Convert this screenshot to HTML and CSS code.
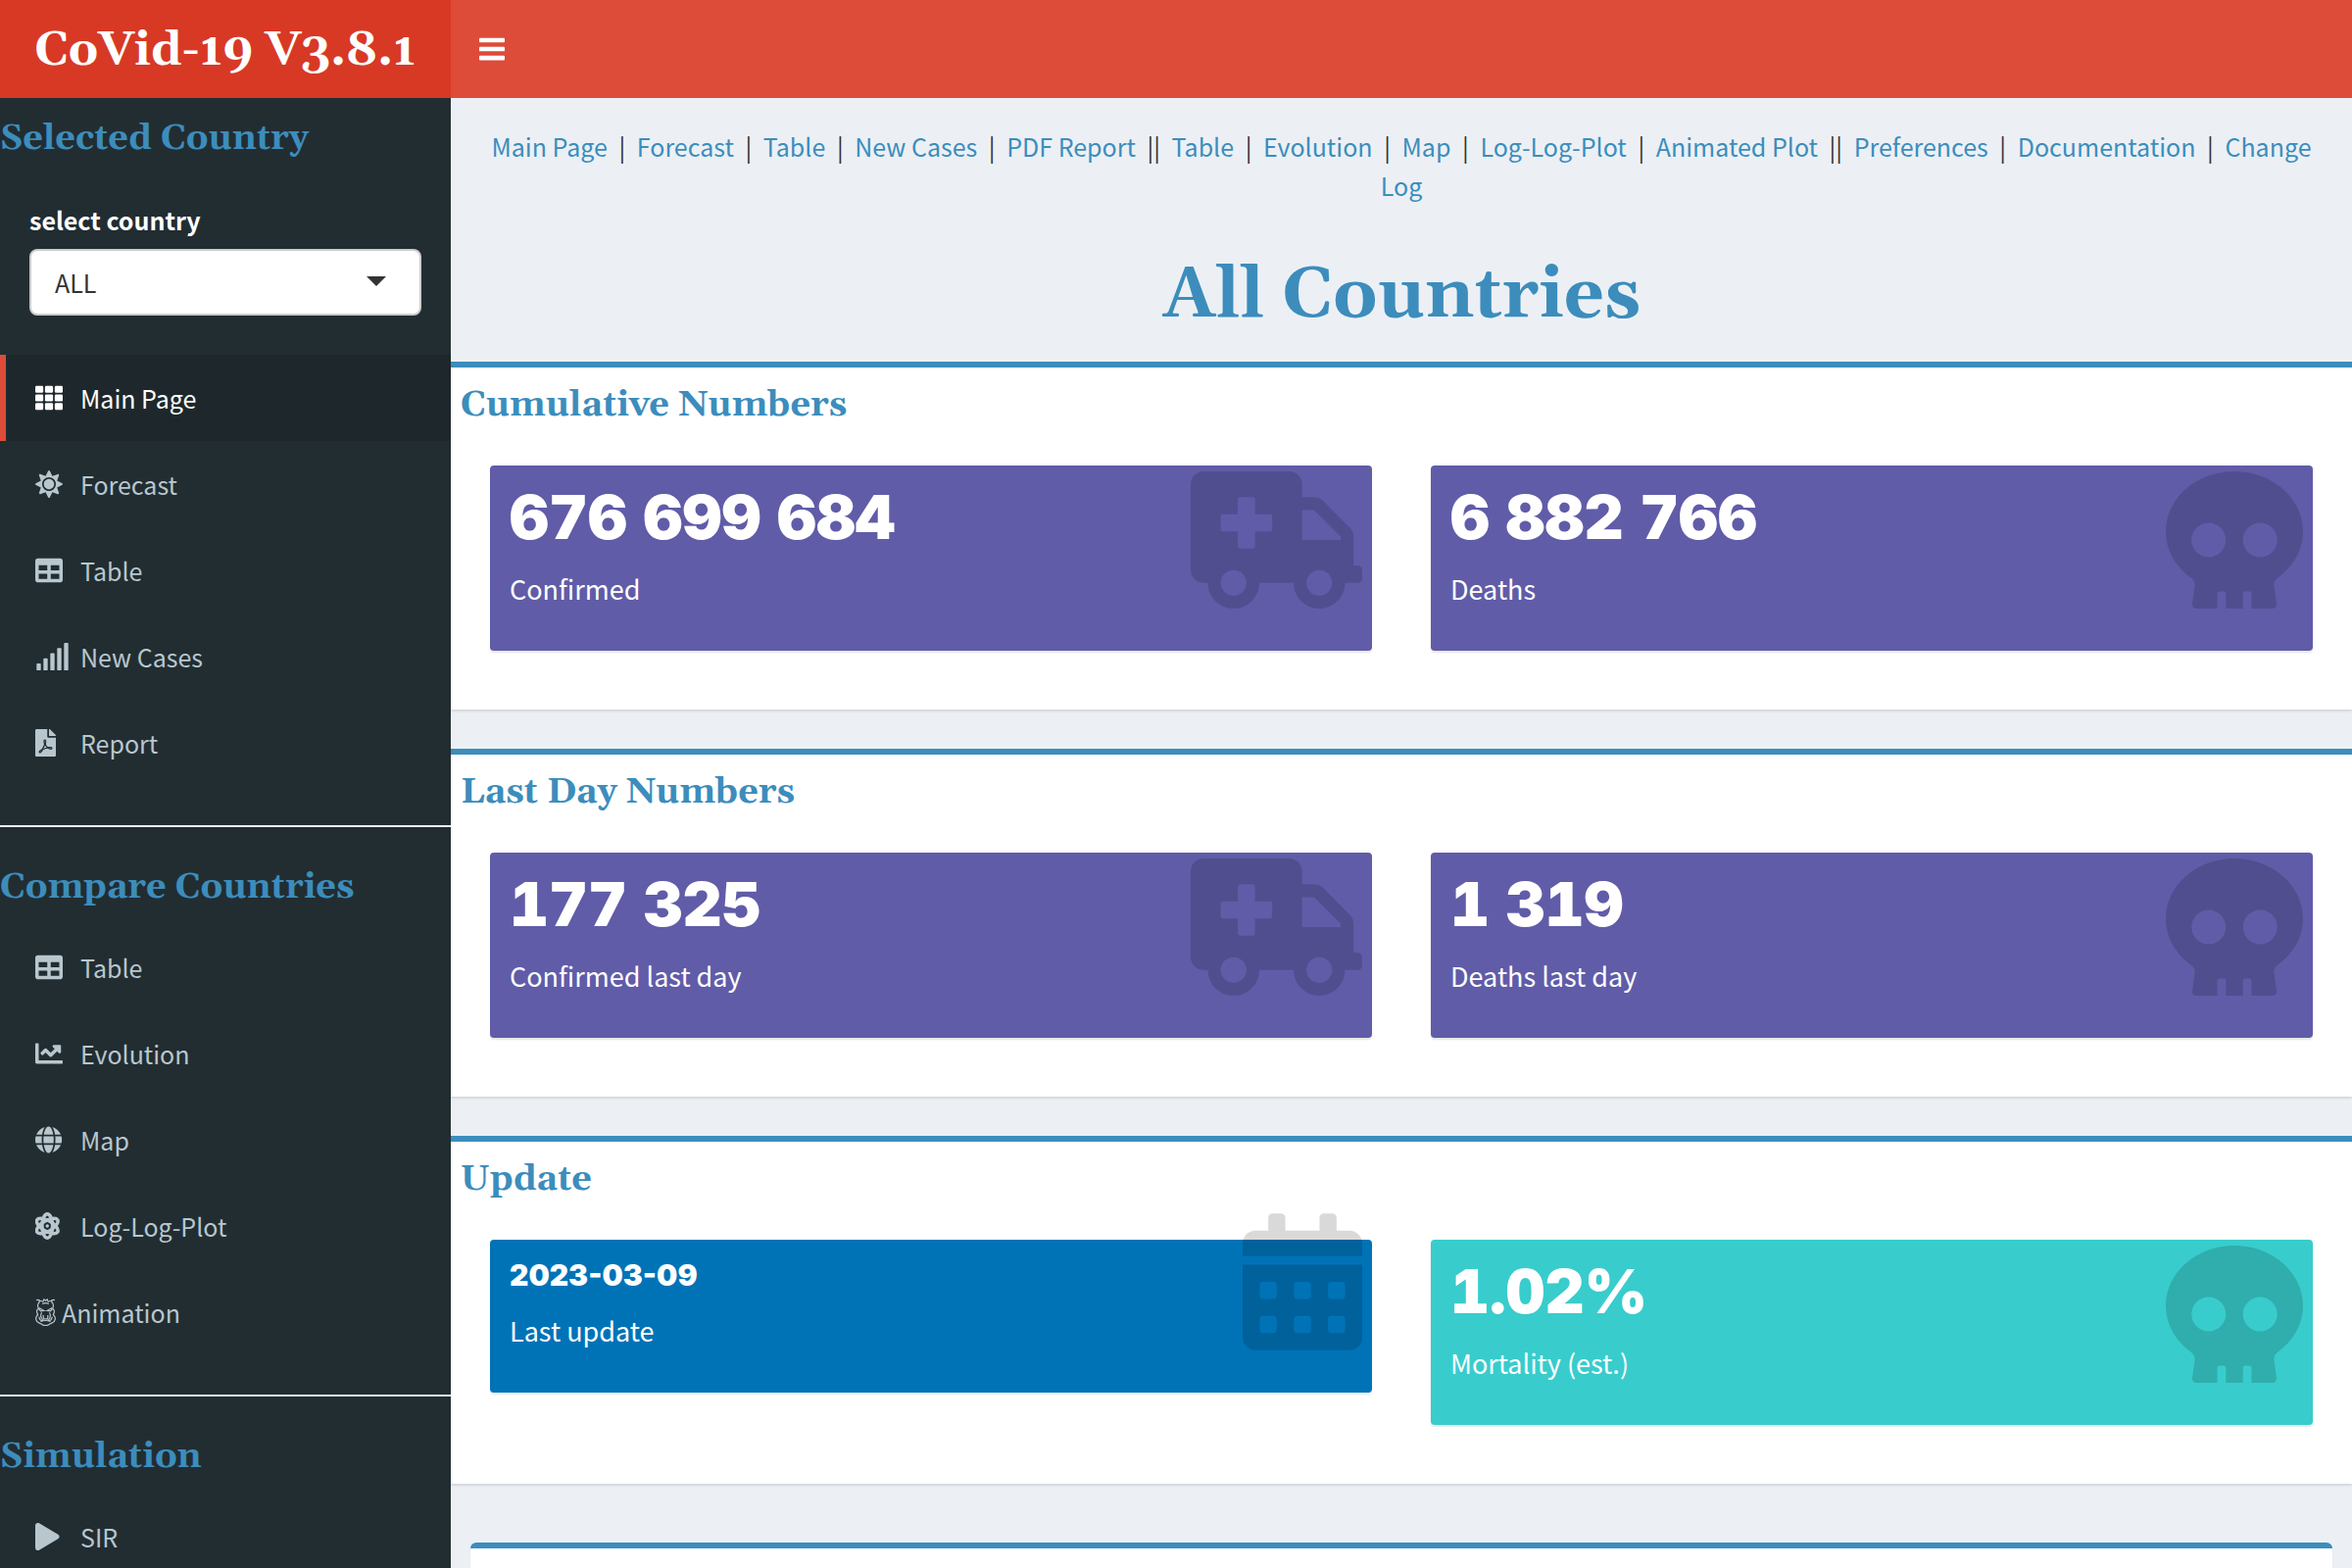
FILE: index.html
```html
<!DOCTYPE html>
<html lang="en">
<head>
<meta charset="utf-8">
<title>CoVid-19 V3.8.1</title>
<link rel="stylesheet" href="styles.css">
</head>
<body>
<svg class="sprite" aria-hidden="true">
  <symbol id="i-bars" viewBox="0 0 448 512"><rect y="60" width="448" height="80" rx="16"/><rect y="216" width="448" height="80" rx="16"/><rect y="372" width="448" height="80" rx="16"/></symbol>
  <symbol id="i-th" viewBox="0 0 512 512"><rect y="32" width="149" height="128" rx="24"/><rect x="181" y="32" width="150" height="128" rx="24"/><rect x="363" y="32" width="149" height="128" rx="24"/><rect y="192" width="149" height="128" rx="24"/><rect x="181" y="192" width="150" height="128" rx="24"/><rect x="363" y="192" width="149" height="128" rx="24"/><rect y="352" width="149" height="128" rx="24"/><rect x="181" y="352" width="150" height="128" rx="24"/><rect x="363" y="352" width="149" height="128" rx="24"/></symbol>
  <symbol id="i-sun" viewBox="0 0 512 512"><path d="M256 160c-52.9 0-96 43.1-96 96s43.1 96 96 96 96-43.1 96-96-43.1-96-96-96zm246.4 80.5l-94.7-47.3 33.5-100.4c4.5-13.6-8.4-26.5-21.9-21.9l-100.4 33.5-47.4-94.8c-6.4-12.8-24.6-12.8-31 0l-47.3 94.7L92.7 70.8c-13.6-4.5-26.5 8.4-21.9 21.9l33.5 100.4-94.7 47.4c-12.8 6.4-12.8 24.6 0 31l94.7 47.3-33.5 100.5c-4.5 13.6 8.4 26.5 21.9 21.9l100.4-33.5 47.3 94.7c6.4 12.8 24.6 12.8 31 0l47.3-94.7 100.4 33.5c13.6 4.5 26.5-8.4 21.9-21.9l-33.5-100.4 94.7-47.3c13-6.5 13-24.7.2-31.1zm-155.9 106c-49.9 49.9-131.1 49.9-181 0-49.9-49.9-49.9-131.1 0-181 49.9-49.9 131.1-49.9 181 0 49.9 49.9 49.9 131.1 0 181z"/></symbol>
  <symbol id="i-table" viewBox="0 0 512 512"><path fill-rule="evenodd" d="M464 32H48C21.5 32 0 53.5 0 80v352c0 26.500 21.500 48 48 48h416c26.500 0 48-21.500 48-48V80c0-26.500-21.500-48-48-48zM224 416H64v-96h160v96zm0-160H64v-96h160v96zm224 160H288v-96h160v96zm0-160H288v-96h160v96z"/></symbol>
  <symbol id="i-signal" viewBox="0 0 640 512"><rect x="24" y="384" width="80" height="128" rx="16"/><rect x="152" y="288" width="80" height="224" rx="16"/><rect x="280" y="192" width="80" height="320" rx="16"/><rect x="408" y="96" width="80" height="416" rx="16"/><rect x="536" y="0" width="80" height="512" rx="16"/></symbol>
  <symbol id="i-pdf" viewBox="0 0 384 512" preserveAspectRatio="xMinYMid meet"><path d="M181.9 256.1c-5-16-4.900-46.900-2-46.900 8.400 0 7.600 36.900 2 46.900zm-1.700 47.200c-7.700 20.200-17.300 43.300-28.400 62.700 18.300-7 39-17.200 62.900-21.900-12.700-9.600-24.900-23.400-34.500-40.800zM86.100 428.100c0 .8 13.200-5.400 34.900-40.200-6.700 6.300-29.100 24.500-34.900 40.200zM248 160h136v328c0 13.300-10.700 24-24 24H24c-13.300 0-24-10.700-24-24V24C0 10.700 10.700 0 24 0h200v136c0 13.200 10.800 24 24 24zm-8 171.800c-20-12.200-33.300-29-42.700-53.800 4.500-18.500 11.600-46.600 6.200-64.200-4.700-29.400-42.400-26.500-47.800-6.800-5 18.300-.4 44.100 8.100 77-11.600 27.600-28.700 64.600-40.800 85.800-.1 0-.1.1-.2.1-27.100 13.900-73.600 44.500-54.500 68 5.600 6.900 16 10 21.500 10 17.900 0 35.700-18 61.100-61.800 25.800-8.500 54.100-19.100 79-23.200 21.700 11.800 47.100 19.500 64 19.500 29.200 0 31.200-32 19.700-43.400-13.900-13.600-54.300-9.700-73.600-7.200zM377 105L279 7c-4.500-4.500-10.600-7-17-7h-6v128h128v-6.100c0-6.300-2.500-12.400-7-16.900zm-74.100 255.300c4.100-2.700-2.500-11.900-42.800-9 37.100 15.800 42.800 9 42.800 9z"/></symbol>
  <symbol id="i-chart" viewBox="0 0 512 512"><path d="M496 384H64V80c0-8.840-7.160-16-16-16H16C7.160 64 0 71.160 0 80v336c0 17.670 14.330 32 32 32h464c8.840 0 16-7.160 16-16v-32c0-8.840-7.160-16-16-16zM464 96H345.940c-21.380 0-32.090 25.850-16.970 40.970l32.400 32.400L288 242.750l-73.370-73.370c-12.500-12.500-32.760-12.500-45.250 0l-68.690 68.690c-6.250 6.250-6.250 16.380 0 22.630l22.620 22.620c6.250 6.250 16.380 6.250 22.630 0L192 237.250l73.370 73.370c12.500 12.500 32.760 12.500 45.250 0l96-96 32.400 32.400c15.120 15.120 40.970 4.410 40.970-16.970V112c.01-8.840-7.150-16-15.990-16z"/></symbol>
  <symbol id="i-globe" viewBox="0 0 496 512" preserveAspectRatio="xMinYMid meet"><path d="M336.500 160C322 70.700 287.800 8 248 8s-74 62.700-88.500 152h177zM152 256c0 22.200 1.200 43.500 3.300 64h185.300c2.100-20.500 3.300-41.800 3.300-64s-1.200-43.500-3.300-64H155.300c-2.100 20.500-3.300 41.800-3.300 64zm324.700-96c-28.600-67.900-86.500-120.400-158-141.600 24.400 33.800 41.200 84.700 50 141.600h108zM177.200 18.400C105.800 39.600 47.800 92.100 19.300 160h108c8.700-56.900 25.500-107.800 49.900-141.600zM487.400 192H372.700c2.100 21 3.300 42.500 3.300 64s-1.200 43-3.300 64h114.600c5.500-20.500 8.600-41.800 8.600-64s-3.100-43.500-8.500-64zM120 256c0-21.500 1.200-43 3.300-64H8.600C3.200 212.500 0 233.800 0 256s3.200 43.500 8.600 64h114.600c-2-21-3.200-42.500-3.200-64zm39.500 96c14.500 89.300 48.700 152 88.500 152s74-62.700 88.500-152h-177zm159.300 141.600c71.400-21.200 129.400-73.700 158-141.600h-108c-8.800 56.900-25.600 107.800-50 141.600zM19.300 352c28.600 67.900 86.500 120.400 158 141.600-24.400-33.800-41.200-84.700-50-141.600h-108z"/></symbol>
  <symbol id="i-atom" viewBox="0 0 448 512" preserveAspectRatio="xMinYMid meet"><g fill="none" stroke="currentColor" stroke-width="64"><ellipse cx="224" cy="256" rx="98" ry="222"/><ellipse cx="224" cy="256" rx="98" ry="222" transform="rotate(60 224 256)"/><ellipse cx="224" cy="256" rx="98" ry="222" transform="rotate(-60 224 256)"/></g><circle cx="224" cy="256" r="32"/></symbol>
  <symbol id="i-grunt" viewBox="0 0 384 512" preserveAspectRatio="xMinYMid meet"><g fill="none" stroke="currentColor" stroke-width="22"><path d="M62 60C90 40 120 42 150 62M322 60C294 40 264 42 234 62M20 30c30-12 60-4 76 22M364 30c-30-12-60-4-76 22M150 50l12-34 30 24 30-24 12 34"/><path d="M85 65C40 80 40 150 62 190 20 210 20 250 48 300 20 350 6 340 14 390c10 60 50 60 90 80 40 45 136 45 176 0 40-20 80-20 90-80 8-50-6-40-34-90 28-50 28-90-14-110 22-40 22-110-23-125"/><path d="M70 175l90 50-60 8-34-40M314 175l-90 50 60 8 34-40M130 100c40-20 84-20 124 0M120 260c-24 40-16 90 0 130M264 260c24 40 16 90 0 130M150 310v60M234 310v60M70 340c10 60 30 80 60 70l20-30h84l20 30c30 10 50-10 60-70M100 430c50-20 134-20 184 0"/></g></symbol>
  <symbol id="i-play" viewBox="0 0 448 512" preserveAspectRatio="xMinYMid meet"><path d="M424.400 214.700L72.400 6.600C43.800-10.300 0 6.100 0 47.900V464c0 37.500 40.700 60.100 72.400 41.300l352-208c31.400-18.500 31.500-64.100 0-82.600z"/></symbol>
  <symbol id="i-ambulance" viewBox="0 0 640 512"><path d="M624 352h-16V243.900c0-12.700-5.100-24.900-14.100-33.900L494 110.100c-9-9-21.200-14.100-33.900-14.100H416V48c0-26.500-21.500-48-48-48H48C21.500 0 0 21.500 0 48v320c0 26.500 21.500 48 48 48h16c0 53 43 96 96 96s96-43 96-96h128c0 53 43 96 96 96s96-43 96-96h48c8.800 0 16-7.200 16-16v-32c0-8.800-7.200-16-16-16zM160 464c-26.500 0-48-21.500-48-48s21.500-48 48-48 48 21.500 48 48-21.500 48-48 48zm144-248c0 4.400-3.600 8-8 8h-56v56c0 4.400-3.600 8-8 8h-48c-4.400 0-8-3.600-8-8v-56h-56c-4.400 0-8-3.600-8-8v-48c0-4.400 3.600-8 8-8h56v-56c0-4.400 3.600-8 8-8h48c4.400 0 8 3.600 8 8v56h56c4.400 0 8 3.600 8 8v48zm176 248c-26.500 0-48-21.500-48-48s21.500-48 48-48 48 21.500 48 48-21.500 48-48 48zm80-208H416V144h44.100l99.900 99.900V256z"/></symbol>
  <symbol id="i-skull" viewBox="0 0 512 512"><path d="M256 0C114.600 0 0 100.300 0 224c0 70.100 36.900 132.600 94.500 173.700 9.600 6.900 15.200 18.100 13.500 29.900l-9.400 66.200c-1.400 9.600 6 18.200 15.700 18.200H192v-56c0-4.400 3.600-8 8-8h16c4.400 0 8 3.600 8 8v56h64v-56c0-4.400 3.600-8 8-8h16c4.400 0 8 3.600 8 8v56h77.700c9.700 0 17.100-8.600 15.700-18.200l-9.400-66.200c-1.700-11.700 3.800-23 13.500-29.900C475.100 356.600 512 294.100 512 224 512 100.300 397.400 0 256 0zm-96 320c-35.300 0-64-28.700-64-64s28.700-64 64-64 64 28.700 64 64-28.700 64-64 64zm192 0c-35.300 0-64-28.700-64-64s28.700-64 64-64 64 28.700 64 64-28.700 64-64 64z"/></symbol>
  <symbol id="i-calendar" viewBox="0 0 448 512"><path d="M0 464c0 26.500 21.500 48 48 48h352c26.500 0 48-21.500 48-48V192H0v272zm320-196c0-6.600 5.400-12 12-12h40c6.600 0 12 5.400 12 12v40c0 6.600-5.400 12-12 12h-40c-6.600 0-12-5.400-12-12v-40zm0 128c0-6.600 5.400-12 12-12h40c6.600 0 12 5.400 12 12v40c0 6.600-5.400 12-12 12h-40c-6.600 0-12-5.400-12-12v-40zM192 268c0-6.600 5.400-12 12-12h40c6.600 0 12 5.400 12 12v40c0 6.600-5.400 12-12 12h-40c-6.600 0-12-5.400-12-12v-40zm0 128c0-6.600 5.400-12 12-12h40c6.600 0 12 5.400 12 12v40c0 6.600-5.400 12-12 12h-40c-6.600 0-12-5.400-12-12v-40zM64 268c0-6.600 5.400-12 12-12h40c6.600 0 12 5.400 12 12v40c0 6.600-5.400 12-12 12H76c-6.600 0-12-5.400-12-12v-40zm0 128c0-6.600 5.400-12 12-12h40c6.600 0 12 5.400 12 12v40c0 6.600-5.400 12-12 12H76c-6.600 0-12-5.400-12-12v-40zM400 64h-48V16c0-8.800-7.200-16-16-16h-32c-8.800 0-16 7.200-16 16v48H160V16c0-8.800-7.200-16-16-16h-32c-8.800 0-16 7.200-16 16v48H48C21.500 64 0 85.500 0 112v48h448v-48c0-26.500-21.500-48-48-48z"/></symbol>
</svg>
<header class="topbar">
  <a class="logo" href="#">CoVid-19 V3.8.1</a>
  <button class="toggle" type="button" aria-label="Toggle navigation"><svg class="toggle-icon"><use href="#i-bars"/></svg></button>
</header>
<div class="layout">
  <aside class="sidebar">
    <h3 class="side-title side-title-first">Selected Country</h3>
    <div class="field">
      <label class="field-label" for="country">select country</label>
      <div class="select-wrap"><select class="select" id="country"><option>ALL</option></select></div>
    </div>
    <nav class="menu">
      <a class="item active" href="#"><svg class="icon"><use href="#i-th"/></svg>Main Page</a>
      <a class="item" href="#"><svg class="icon"><use href="#i-sun"/></svg>Forecast</a>
      <a class="item" href="#"><svg class="icon"><use href="#i-table"/></svg>Table</a>
      <a class="item" href="#"><svg class="icon icon-wide"><use href="#i-signal"/></svg>New Cases</a>
      <a class="item" href="#"><svg class="icon"><use href="#i-pdf"/></svg>Report</a>
    </nav>
    <hr class="rule">
    <h3 class="side-title">Compare Countries</h3>
    <nav class="menu">
      <a class="item" href="#"><svg class="icon"><use href="#i-table"/></svg>Table</a>
      <a class="item" href="#"><svg class="icon"><use href="#i-chart"/></svg>Evolution</a>
      <a class="item" href="#"><svg class="icon"><use href="#i-globe"/></svg>Map</a>
      <a class="item" href="#"><svg class="icon"><use href="#i-atom"/></svg>Log-Log-Plot</a>
      <a class="item" href="#"><svg class="icon icon-narrow"><use href="#i-grunt"/></svg>Animation</a>
    </nav>
    <hr class="rule">
    <h3 class="side-title">Simulation</h3>
    <nav class="menu">
      <a class="item" href="#"><svg class="icon"><use href="#i-play"/></svg>SIR</a>
    </nav>
  </aside>
  <main class="content">
    <nav class="links">
      <a href="#">Main Page</a> <span class="sep">|</span> <a href="#">Forecast</a> <span class="sep">|</span> <a href="#">Table</a> <span class="sep">|</span> <a href="#">New Cases</a> <span class="sep">|</span> <a href="#">PDF Report</a> <span class="sep">||</span> <a href="#">Table</a> <span class="sep">|</span> <a href="#">Evolution</a> <span class="sep">|</span> <a href="#">Map</a> <span class="sep">|</span> <a href="#">Log-Log-Plot</a> <span class="sep">|</span> <a href="#">Animated Plot</a> <span class="sep">||</span> <a href="#">Preferences</a> <span class="sep">|</span> <a href="#">Documentation</a> <span class="sep">|</span> <a href="#">Change Log</a>
    </nav>
    <h1 class="page-title">All Countries</h1>
    <section class="box">
      <h3 class="box-title">Cumulative Numbers</h3>
      <div class="cards">
        <div class="card purple"><p class="value">676 699 684</p><p class="caption">Confirmed</p><svg class="card-icon ambulance"><use href="#i-ambulance"/></svg></div>
        <div class="card purple"><p class="value">6 882 766</p><p class="caption">Deaths</p><svg class="card-icon"><use href="#i-skull"/></svg></div>
      </div>
    </section>
    <section class="box">
      <h3 class="box-title">Last Day Numbers</h3>
      <div class="cards">
        <div class="card purple"><p class="value">177 325</p><p class="caption">Confirmed last day</p><svg class="card-icon ambulance"><use href="#i-ambulance"/></svg></div>
        <div class="card purple"><p class="value">1 319</p><p class="caption">Deaths last day</p><svg class="card-icon"><use href="#i-skull"/></svg></div>
      </div>
    </section>
    <section class="box">
      <h3 class="box-title">Update</h3>
      <div class="cards">
        <div class="card blue"><p class="value value-date">2023-03-09</p><p class="caption">Last update</p><svg class="card-icon calendar"><use href="#i-calendar"/></svg></div>
        <div class="card teal"><p class="value">1.02%</p><p class="caption">Mortality (est.)</p><svg class="card-icon"><use href="#i-skull"/></svg></div>
      </div>
    </section>
    <section class="box box-inset"></section>
  </main>
</div>
</body>
</html>
```
FILE: styles.css
```css
:root {
  --sans: "Source Sans Pro", "Noto Sans CJK JP", "Noto Sans", sans-serif;
  --serif: Gelasio, Georgia, "DejaVu Serif", serif;
  --black: "Arial Black", Inter, "Liberation Sans", sans-serif;
  --blue: #3c8dbc;
}
* { box-sizing: border-box; }
body {
  margin: 0;
  height: 100vh;
  display: flex;
  flex-direction: column;
  overflow: hidden;
  background: #ecf0f5;
  color: #333;
  font: 25px/40px var(--sans);
}
h1, h3, p { margin: 0; }
a { color: var(--blue); text-decoration: none; }
svg { fill: currentColor; }
.sprite { position: absolute; width: 0; height: 0; }

.topbar { display: flex; flex: none; height: 100px; background: #dd4b39; }
.logo {
  width: 460px;
  padding-top: 4px;
  background: #d73925;
  color: #fff;
  font: bold 48px/96px var(--serif);
  text-align: center;
  white-space: nowrap;
}
.toggle {
  padding: 0 29px;
  border: 0;
  background: none;
  color: #fff;
}
.toggle-icon { display: block; width: 26px; height: 30px; }

.layout { display: flex; flex: 1; min-height: 0; }
.sidebar { flex: none; width: 460px; overflow: hidden; background: #222d32; color: #b8c7ce; }
.side-title {
  padding: 42px 0 17px;
  color: var(--blue);
  font: bold 36px/40px var(--serif);
  white-space: nowrap;
}
.side-title-first { padding-top: 22px; }
.field { padding: 25px 30px 40px; }
.field-label { display: block; margin-bottom: 10px; color: #fff; font-weight: bold; }
.select-wrap { position: relative; }
.select-wrap::after {
  content: "";
  position: absolute;
  right: 36px;
  top: 28px;
  border: 10px solid transparent;
  border-top-color: #333;
  border-bottom: 0;
  pointer-events: none;
}
.select {
  appearance: none;
  display: block;
  width: 100%;
  height: 68px;
  padding: 0 24px;
  border: 2px solid #ccc;
  border-radius: 8px;
  background: #fff;
  color: #333;
  font: 25px/40px var(--sans);
}
.menu { display: flex; flex-direction: column; }
.item {
  display: flex;
  align-items: center;
  height: 88px;
  padding: 0 30px;
  border-left: 6px solid transparent;
  color: #b8c7ce;
}
.item.active { border-left-color: #dd4b39; background: #1e282c; color: #fff; }
.icon { flex: none; width: 28px; height: 28px; margin-right: 18px; }
.icon-wide { width: 35px; margin-right: 11px; }
.icon-narrow { width: 21px; margin-right: 6px; }
.rule { margin: 40px 0 0; border: 0; border-top: 2px solid #ecf0f5; }

.content { flex: 1; min-width: 0; overflow: hidden; }
.links { padding: 29px 40px 31px; text-align: center; }
.sep { margin: 0 6px; }
.page-title {
  padding: 22px 0 27px;
  color: var(--blue);
  font: bold 72px/80px var(--serif);
  text-align: center;
}
.box {
  margin-bottom: 40px;
  padding: 19px 40px 60px;
  border-top: 6px solid var(--blue);
  background: #fff;
  box-shadow: 0 2px 2px rgba(0, 0, 0, .1);
}
.box-title {
  margin: 0 0 41px -30px;
  color: var(--blue);
  font: bold 36px/40px var(--serif);
}
.box-inset { height: 120px; margin: 60px 20px 0; border-radius: 6px; }
.cards { display: grid; grid-template-columns: 1fr 1fr; align-items: start; gap: 60px; }
.card {
  position: relative;
  padding: 20px 20px 42px;
  border-radius: 4px;
  box-shadow: 0 2px 2px rgba(0, 0, 0, .1);
  color: #fff;
}
.purple { background: #605ca8; }
.blue { background: #0073b7; }
.teal { background: #39cccc; }
.value {
  margin-bottom: 18px;
  font: 900 62px/66px var(--black);
  font-variant-numeric: tabular-nums;
  white-space: nowrap;
}
.value-date { font-size: 30px; line-height: 33px; font-variant-numeric: normal; }
.caption { font-size: 27px; line-height: 43px; }
.card-icon {
  position: absolute;
  right: 10px;
  bottom: 43px;
  width: 140px;
  height: 140px;
  color: rgba(0, 0, 0, .15);
}
.ambulance { width: 175px; }
.calendar { width: 122px; }
```
